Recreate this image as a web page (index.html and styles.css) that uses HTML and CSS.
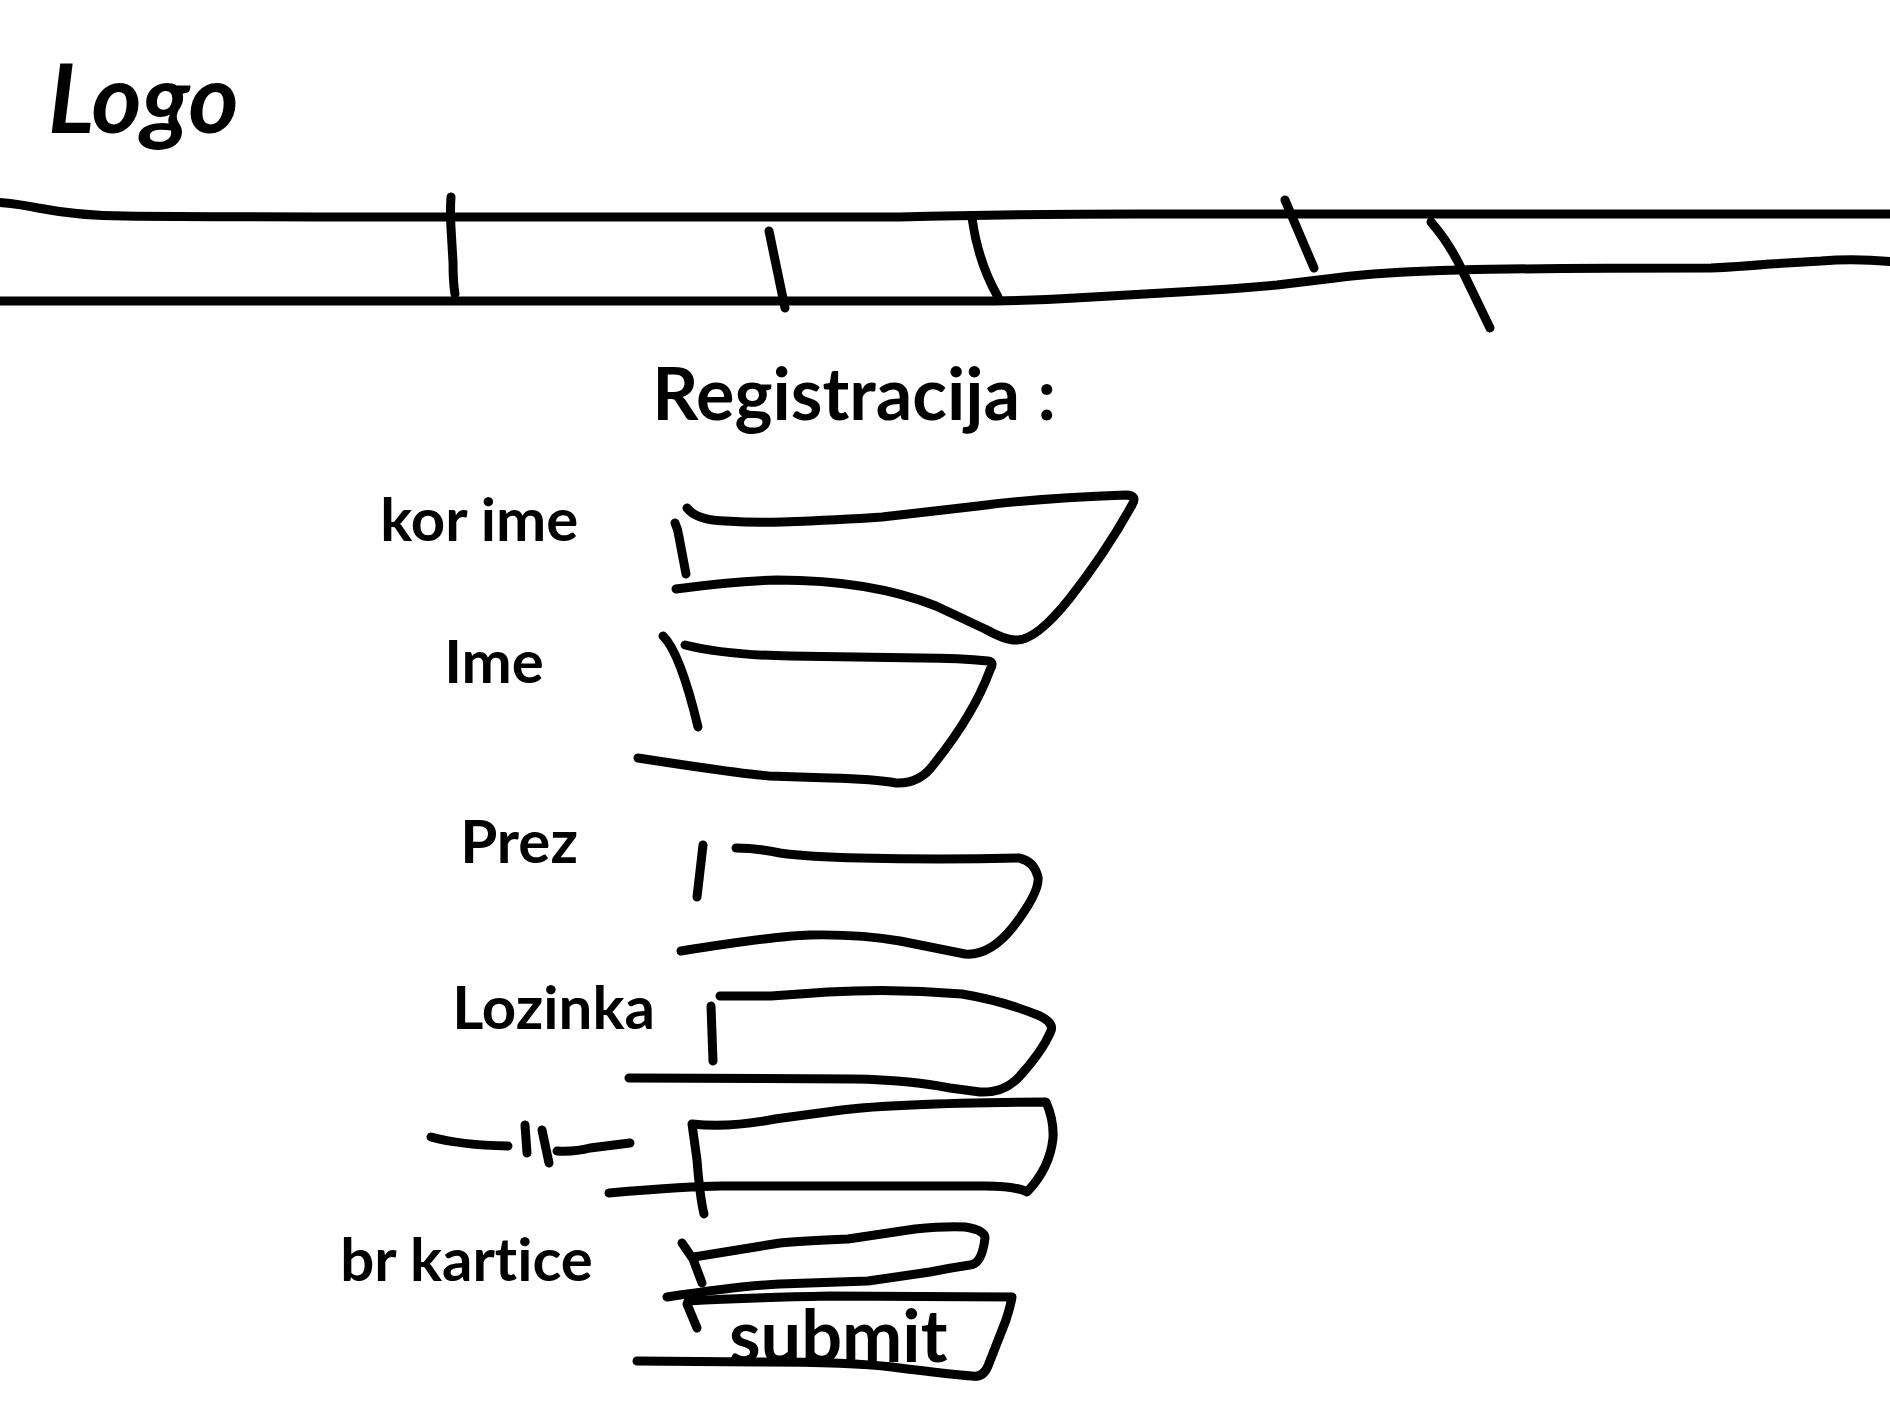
FILE: index.html
```html
<!DOCTYPE html>
<html lang="hr">
<head>
<meta charset="utf-8">
<meta name="viewport" content="width=device-width, initial-scale=1">
<title>Registracija</title>
<link rel="stylesheet" href="styles.css">
</head>
<body>
<header class="header">
  <a class="logo" href="#">Logo</a>
</header>
<nav class="nav" aria-label="Glavni izbornik">
  <svg class="ink" viewBox="0 190 1890 150" preserveAspectRatio="none" aria-hidden="true">
    <path d="M-5 202 Q20 204 38 208 Q80 216 125 216 Q200 217 450 217 H900 Q1010 214 1140 214 H1895"/>
    <path d="M-5 301 H970 Q1030 301 1075 298 L1180 292 Q1235 289 1277 285 L1335 278 Q1380 272 1460 270 Q1540 268 1711 268 Q1735 267 1770 264 L1821 261 Q1856 258 1895 262"/>
    <path d="M451 197 Q450 210 451 228 L453 262 Q453 282 455 294"/>
    <path d="M769 231 L785 308"/>
    <path d="M972 218 Q978 262 998 297"/>
    <path d="M1285 200 L1314 268"/>
    <path d="M1431 222 Q1450 244 1462 270 L1490 328"/>
  </svg>
</nav>
<main class="main">
  <h1 class="title">Registracija :</h1>
  <form class="form">
    <div class="row row-username">
      <label class="label" for="username">kor ime</label>
      <div class="field">
        <svg class="ink" viewBox="600 490 540 142" aria-hidden="true">
          <path d="M675 523 Q678 529 679 537 L686 574"/>
          <path d="M687 508 Q696 520 725 521 Q755 523 782 522 Q840 520 882 517 L978 506 Q1040 498 1126 495 Q1138 495 1132 505 Q1106 552 1070 598 Q1035 642 1015 640 Q1005 640 985 629 L936 606 Q870 580 777 580 Q735 581 676 589"/>
        </svg>
        <input class="input" id="username" type="text">
      </div>
    </div>
    <div class="row row-name">
      <label class="label" for="name">Ime</label>
      <div class="field">
        <svg class="ink" viewBox="600 632 540 180" aria-hidden="true">
          <path d="M663 636 Q680 652 698 727"/>
          <path d="M685 645 Q725 655 790 656 L921 658 Q960 658 988 661 Q995 662 990 670 Q974 714 934 764 Q920 784 896 783 Q875 779 830 778 L769 776 Q735 773 638 758"/>
        </svg>
        <input class="input" id="name" type="text">
      </div>
    </div>
    <div class="row row-surname">
      <label class="label" for="surname">Prez</label>
      <div class="field">
        <svg class="ink" viewBox="600 812 540 158" aria-hidden="true">
          <path d="M703 845 L697 897"/>
          <path d="M736 848 Q756 848 780 853 Q808 857 860 858 Q940 860 1019 858 Q1034 861 1038 877 Q1040 892 1013 927 Q990 956 965 954 L950 951 L900 941 Q860 934 810 935 Q775 936 681 951"/>
        </svg>
        <input class="input" id="surname" type="text">
      </div>
    </div>
    <div class="row row-password">
      <label class="label" for="password">Lozinka</label>
      <div class="field">
        <svg class="ink" viewBox="600 970 540 128" aria-hidden="true">
          <path d="M711 1006 L713 1061"/>
          <path d="M720 996 H771 L828 992 Q895 988 962 994 Q1004 1001 1040 1016 Q1054 1023 1051 1031 Q1042 1052 1019 1077 Q1004 1093 980 1092 L950 1088 Q910 1080 854 1079 L629 1078"/>
        </svg>
        <input class="input" id="password" type="password">
      </div>
    </div>
    <div class="row row-repeat">
      <label class="label" for="repeat" aria-label="Ponovi lozinku">
        <svg class="ditto" viewBox="424 1110 212 62" aria-hidden="true">
          <path d="M431 1137 Q460 1145 508 1146"/>
          <path d="M525 1125 L527 1153"/>
          <path d="M542 1130 L549 1163"/>
          <path d="M557 1151 Q575 1152 590 1148 L630 1143"/>
        </svg>
      </label>
      <div class="field">
        <svg class="ink" viewBox="600 1098 540 124" aria-hidden="true">
          <path d="M704 1214 Q700 1198 697 1160 L692 1124 Q730 1128 775 1119 L842 1110 Q900 1103 1046 1102 Q1054 1120 1053 1138 Q1050 1168 1027 1192 Q1016 1186 985 1186 H722 Q690 1186 609 1193"/>
        </svg>
        <input class="input" id="repeat" type="password">
      </div>
    </div>
    <div class="row row-card">
      <label class="label" for="card">br kartice</label>
      <div class="field">
        <svg class="ink" viewBox="600 1222 540 70" aria-hidden="true">
          <path d="M682 1243 L693 1259 L702 1283"/>
          <path d="M694 1257 L780 1243 Q800 1241 848 1239 L915 1229 Q945 1226 965 1227 Q985 1230 985 1238 Q982 1264 970 1265 Q950 1268 930 1272 L868 1281 L780 1284 Q740 1286 667 1297"/>
        </svg>
        <input class="input" id="card" type="text" inputmode="numeric">
      </div>
    </div>
    <div class="row row-submit">
      <div class="field">
        <svg class="ink" viewBox="600 1292 540 100" aria-hidden="true">
          <path d="M687 1304 L697 1328"/>
          <path d="M688 1301 Q740 1298 829 1296 L1012 1297 Q1011 1304 1006 1320 L988 1366 Q983 1378 972 1376 Q955 1375 892 1367 Q850 1362 756 1362 L637 1361"/>
        </svg>
        <button class="submit" type="submit">submit</button>
      </div>
    </div>
  </form>
</main>
</body>
</html>
```
FILE: styles.css
```css
* {
  box-sizing: border-box;
}

body {
  margin: 0;
  background: #fff;
  color: #000;
  font-family: Lato, "Liberation Sans", sans-serif;
  font-weight: 700;
  font-variant-ligatures: none;
}

svg {
  display: block;
  overflow: visible;
  fill: none;
  stroke: #000;
  stroke-width: 9px;
  stroke-linecap: round;
  stroke-linejoin: round;
}

.header {
  height: 190px;
  padding: 48px 48px 0;
}

.logo {
  display: inline-block;
  color: inherit;
  font-size: 96px;
  font-style: italic;
  line-height: 96px;
  text-decoration: none;
}

.nav {
  position: relative;
  height: 150px;
  overflow: hidden;
}

.ink {
  position: absolute;
  inset: 0;
  width: 100%;
  height: 100%;
}

.main {
  padding-left: 18%;
}

.title {
  height: 150px;
  margin: 0;
  padding: 8px 0 0 312px;
  font-size: 72px;
  line-height: 88px;
}

.form {
  display: flex;
  flex-direction: column;
}

.row {
  display: flex;
}

.label {
  flex: none;
  width: 260px;
  padding-left: 40px;
  font-size: 60px;
  line-height: 56px;
  white-space: nowrap;
}

.field {
  position: relative;
  flex: none;
  width: 540px;
}

.input,
.submit {
  position: absolute;
  inset: 16px 120px 16px 112px;
  margin: 0;
  padding: 0;
  border: 0;
  background: transparent;
  color: inherit;
  font: inherit;
  font-size: 40px;
  outline: 0;
}

.submit {
  inset: 8px 176px 24px 112px;
  font-size: 72px;
  line-height: 68px;
}

.row-username {
  height: 142px;
}

.row-name {
  height: 180px;
}

.row-name .label {
  padding-left: 104px;
}

.row-surname {
  height: 158px;
}

.row-surname .label {
  padding-left: 120px;
}

.row-password {
  height: 128px;
}

.row-password .label {
  padding: 8px 0 0 112px;
}

.row-repeat {
  height: 124px;
}

.row-repeat .label {
  padding: 12px 0 0 84px;
}

.ditto {
  width: 212px;
  height: 62px;
}

.row-card {
  height: 70px;
}

.row-card .label {
  padding: 8px 0 0;
}

.row-submit {
  height: 100px;
  padding-left: 260px;
}
```
